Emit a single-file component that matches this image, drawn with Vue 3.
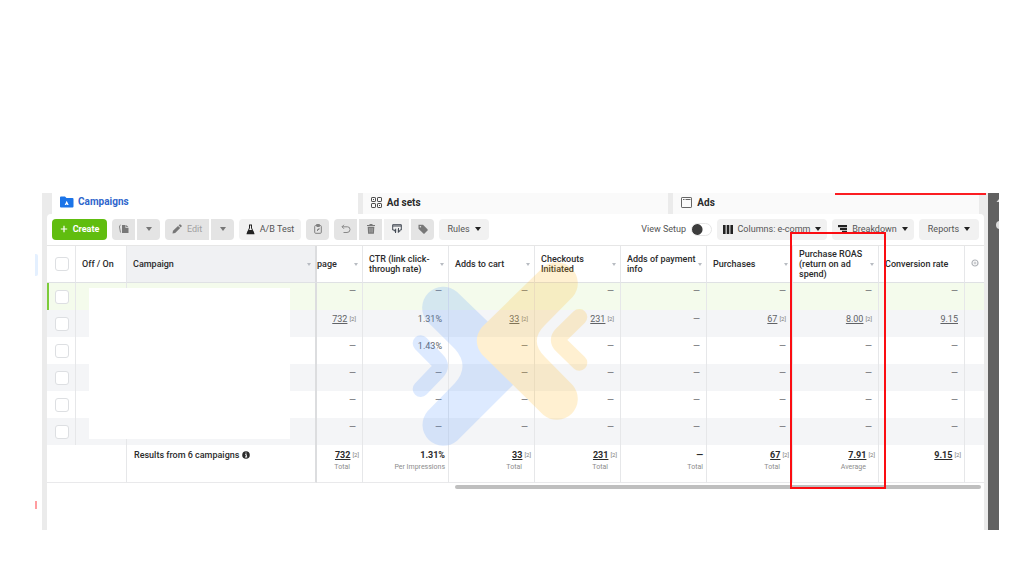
<script setup>
import { ref } from 'vue'

const columns = [
  { key: 'page', label: 'page', cells: ['—', '732', '—', '—', '—', '—'], linked: true, total: '732', note: 'Total' },
  { key: 'ctr', label: 'CTR (link click-through rate)', cells: ['—', '1.31%', '1.43%', '—', '—', '—'], total: '1.31%', note: 'Per Impressions' },
  { key: 'cart', label: 'Adds to cart', cells: ['—', '33', '—', '—', '—', '—'], linked: true, total: '33', note: 'Total' },
  { key: 'checkout', label: 'Checkouts Initiated', cells: ['—', '231', '—', '—', '—', '—'], linked: true, total: '231', note: 'Total' },
  { key: 'payment', label: 'Adds of payment info', cells: ['—', '—', '—', '—', '—', '—'], total: '—', note: 'Total' },
  { key: 'purchases', label: 'Purchases', cells: ['—', '67', '—', '—', '—', '—'], linked: true, total: '67', note: 'Total' },
  { key: 'roas', label: 'Purchase ROAS (return on ad spend)', cells: ['—', '8.00', '—', '—', '—', '—'], linked: true, total: '7.91', note: 'Average' },
  { key: 'rate', label: 'Conversion rate', cells: ['—', '9.15', '—', '—', '—', '—'], linked: true, bare: true, total: '9.15', note: '' },
]
const selected = ref([false, false, false, false, false, false])
const all = ref(false)
const setup = ref(false)
</script>

<template>
  <main class="page">
    <span class="edge-blue"></span>
    <span class="edge-red"></span>
    <div class="frame">
      <div class="manager">
        <nav class="tabs">
          <a href="#" class="tab active">
            <svg width="14" height="12" viewBox="0 0 14 12"><path d="M0 1.5Q0 .5 1 .5H5L6.5 2H12.5Q13.500 2 13.500 3V10.500Q13.500 11.500 12.500 11.500H1Q0 11.500 0 10.500Z" fill="#1b74e8" /><path d="M6.700 4.800L8.700 9H7.500L6.700 8.300L5.900 9H4.700Z" fill="#fff" /></svg>
            <span>Campaigns</span>
          </a>
          <a href="#" class="tab">
            <svg width="12" height="12" viewBox="0 0 12 12" fill="none" stroke="#4a4a4a"><rect x=".5" y=".5" width="4" height="4" rx=".6" /><rect x="6.500" y=".5" width="4" height="4" rx=".6" /><rect x=".5" y="6.500" width="4" height="4" rx=".6" /><rect x="6.500" y="6.500" width="4" height="4" rx=".6" /><path d="M2 2.500H3M8 8.500H9" /></svg>
            <span>Ad sets</span>
          </a>
          <a href="#" class="tab">
            <svg width="12" height="12" viewBox="0 0 12 12" fill="none" stroke="#666"><rect x=".5" y=".5" width="10" height="10" rx=".6" /><path d="M2 2.500H3.500M4.500 2.500H9.500" /></svg>
            <span>Ads</span>
          </a>
        </nav>

        <section class="panel">
          <div class="toolbar">
            <button class="btn create">
              <svg width="8" height="8" viewBox="0 0 8 8" stroke="#fff" stroke-width="1.200"><path d="M4 .8V7.200M.8 4H7.200" /></svg>
              Create
            </button>
            <div class="group">
              <button class="btn muted icon" aria-label="Duplicate">
                <svg width="12" height="12" viewBox="0 0 12 12"><path d="M4 2H7.500V5H10.500V10H4Z" fill="#777" /><path d="M8.200 2L10.500 4.300H8.200Z" fill="#777" /><path d="M2.700 2Q1.200 2.500 1.500 4L2.500 9.500" fill="none" stroke="#888" /></svg>
              </button>
              <button class="btn muted icon" aria-label="Duplicate options"><i class="caret soft"></i></button>
            </div>
            <div class="group">
              <button class="btn muted edit">
                <svg width="10" height="10" viewBox="0 0 10 10" fill="#777"><path d="M.5 9.500L1 6.800L6 1.900L8.200 4.100L3.200 9Z" /><path d="M6.600 1.300L7.600.4Q8 .1 8.400.4L9.600 1.600Q9.900 2 9.600 2.400L8.700 3.400Z" /></svg>
                Edit
              </button>
              <button class="btn muted icon" aria-label="Edit options"><i class="caret soft"></i></button>
            </div>
            <button class="btn test">
              <svg width="9" height="11" viewBox="0 0 9 11"><path d="M3 1H6M3.500 1V4L1 9.500H8L5.500 4V1" fill="none" stroke="#222" /><path d="M2.500 6H6.500L8.500 10.200H.5Z" fill="#222" /></svg>
              A/B Test
            </button>
            <button class="btn muted icon" aria-label="Clipboard">
              <svg width="8" height="10" viewBox="0 0 8 10" fill="none" stroke="#808080"><rect x=".7" y="1.500" width="6.600" height="7.800" rx="1" /><path d="M2.500 1.500V.5H5.500V2.500H2.500M3.500 7V5.500H5V4" /></svg>
            </button>
            <div class="group">
              <button class="btn muted icon" aria-label="Undo">
                <svg width="10" height="10" viewBox="0 0 10 10" fill="none" stroke="#888"><path d="M3 .8L1 2.800L3 4.800M1 2.800H6.500Q9 2.800 9 5.500Q9 8.500 6 8.500H2.500" /></svg>
              </button>
              <button class="btn muted icon" aria-label="Delete">
                <svg width="8" height="10" viewBox="0 0 8 10"><path d="M0 1H2.500V0H5.500V1H8V2H0Z" fill="#777" /><path d="M.7 2.700H7.300L6.900 9.800H1.100Z" fill="#777" /><path d="M2.700 4V8.500M4 4V8.500M5.300 4V8.500" stroke="#bbb" stroke-width=".6" /></svg>
              </button>
              <button class="btn icon wide" aria-label="Import and export">
                <svg width="10" height="10" viewBox="0 0 10 10" fill="none" stroke="#444b55"><path d="M2 6H.7V.7H9.300V6H8M.7 2H9.300" /><path d="M1.800 6.500L4 4.700V8.300ZM8.300 7L6 5.200V8.800Z" fill="#444b55" stroke-width=".4" /><path d="M3.500 9V6.500M6.500 4V7" /></svg>
              </button>
              <button class="btn muted icon" aria-label="Tag">
                <svg width="10" height="10" viewBox="0 0 10 10"><path d="M.5.8H5L9.500 5.300Q10 6 9.500 6.600L6.600 9.500Q6 10 5.300 9.500L.5 4.800Z" fill="#777" /><circle cx="2.400" cy="2.700" r=".8" fill="#e4e4e4" /></svg>
              </button>
            </div>
            <button class="btn rules">Rules <i class="caret"></i></button>

            <label class="setup">View Setup <input v-model="setup" type="checkbox" role="switch" /></label>
            <button class="btn columns">
              <svg width="10" height="9" viewBox="0 0 10 9" fill="#222"><rect width="2.600" height="9" /><rect x="3.700" width="2.600" height="9" /><rect x="7.400" width="2.600" height="9" /></svg>
              Columns: e-comm <i class="caret"></i>
            </button>
            <button class="btn breakdown">
              <svg width="9" height="8" viewBox="0 0 9 8" fill="#222"><rect width="9" height="2.200" /><rect x="2" y="2.900" width="7" height="2.200" /><rect x="4" y="5.800" width="5" height="2.200" /></svg>
              Breakdown <i class="caret"></i>
            </button>
            <button class="btn reports">Reports <i class="caret"></i></button>
          </div>

          <table>
            <colgroup>
              <col class="w-check" /><col class="w-switch" /><col /><col class="w-page" />
              <col v-for="c in columns.slice(1)" :key="c.key" class="w-metric" />
              <col class="w-end" />
            </colgroup>
            <thead>
              <tr>
                <th><input v-model="all" type="checkbox" class="tick" aria-label="Select all campaigns" /></th>
                <th>Off / On</th>
                <th class="name"><div class="head">Campaign<i class="caret sort"></i></div></th>
                <th v-for="c in columns" :key="c.key" :class="'col-' + c.key">
                  <div class="head"><span>{{ c.label }}</span><i v-if="c.key !== 'rate'" class="caret sort"></i></div>
                </th>
                <th class="end">
                  <svg width="8" height="8" viewBox="0 0 8 8" fill="none" stroke="#b0b3b8"><circle cx="4" cy="4" r="3" stroke-width="1.200" /><path d="M4 2.500V5.500M2.500 4H5.500" stroke-width=".8" /></svg>
                </th>
              </tr>
            </thead>
            <tbody>
              <tr v-for="(s, i) in selected" :key="i">
                <td><input v-model="selected[i]" type="checkbox" class="tick" :aria-label="'Select campaign ' + (i + 1)" /></td>
                <td></td>
                <td class="name"></td>
                <td v-for="c in columns" :key="c.key" class="num">
                  <template v-if="c.linked && c.cells[i] !== '—'"><span class="dotted">{{ c.cells[i] }}</span><small v-if="!c.bare">[2]</small></template>
                  <template v-else>{{ c.cells[i] }}</template>
                </td>
                <td></td>
              </tr>
            </tbody>
            <tfoot>
              <tr>
                <td colspan="2"></td>
                <td class="name results">
                  Results from 6 campaigns
                  <svg width="8" height="8" viewBox="0 0 8 8"><circle cx="4" cy="4" r="3.800" fill="#2b2b2b" /><path d="M4 1.500V2.600M3.200 3.600H4.300V6M3 6H5.200" stroke="#fff" fill="none" /></svg>
                </td>
                <td v-for="c in columns" :key="c.key" class="num">
                  <template v-if="c.linked"><b class="dotted">{{ c.total }}</b><small>[2]</small></template>
                  <b v-else>{{ c.total }}</b>
                  <p :class="{ inset: c.linked }">{{ c.note }}</p>
                </td>
                <td></td>
              </tr>
            </tfoot>
          </table>
          <div class="scroll"></div>
          <div class="cover"></div>
        </section>
      </div>
      <aside class="rail">
        <svg width="11" height="50" viewBox="0 0 11 50" fill="#ddd"><path d="M11 6L8.500 9H11Z" /><circle cx="12" cy="32" r="4" /></svg>
      </aside>

      <svg class="mark" width="180" height="190" viewBox="410 259 180 190">
        <g opacity=".2">
          <path fill="#5a9bff" d="M457.100 291.100L533 364L457.100 439.800A21 21 0 0 1 427.500 410.200L455 382Q470 365 455 348L427.500 320.800A21 21 0 0 1 457.100 291.100Z" />
          <path fill="none" stroke="#5a9bff" stroke-width="16" stroke-linecap="round" d="M420.700 342.300L437 359Q443 365 437 371L420.700 388" />
          <path fill="#ffb91e" d="M543.200 266.200L482 326Q471.500 339.500 482 353.500L543.200 413.800A21 21 0 0 0 572.800 384.200L545 356Q528.500 340 545 324L572.800 295.800A21 21 0 0 0 543.200 266.200Z" />
          <path fill="none" stroke="#ffb91e" stroke-width="16" stroke-linecap="round" d="M579.300 316L561.700 333.300Q556 339 561.700 344.700L579.300 361.700" />
        </g>
      </svg>
      <span class="red-line"></span>
      <span class="red-box"></span>
    </div>
  </main>
</template>

<style>
body {
  background: #fff;
}
</style>

<style scoped>
* {
  box-sizing: border-box;
}
.page {
  position: relative;
  padding: 193px 25px 46px 42px;
  font-family: Roboto, "Liberation Sans", sans-serif;
  font-size: 9px;
  line-height: 10px;
  color: #2b2b2b;
}
.edge-blue,
.edge-red {
  position: absolute;
  left: 35px;
  width: 2px;
}
.edge-blue {
  top: 254px;
  width: 3px;
  height: 22px;
  border-radius: 0 2px 2px 0;
  background: #e4f0ff;
}
.edge-red {
  top: 501px;
  height: 8px;
  background: #ff9da0;
}
.frame {
  position: relative;
  display: flex;
  min-height: 337px;
}
.manager {
  flex: 1;
  min-width: 0;
  display: flex;
  flex-direction: column;
  padding: 0 4px 0 5px;
  background: #ebebeb;
}
.rail {
  width: 11px;
  background: #616161;
}
.tabs {
  display: grid;
  grid-template-columns: repeat(3, 1fr);
  gap: 5px;
  height: 21px;
  padding: 0 5px;
}
.tab {
  display: flex;
  align-items: center;
  gap: 4px;
  padding: 0 8px 2px;
  background: #fafafa;
  color: #2b2b2b;
  font-size: 10px;
  font-weight: 700;
  line-height: 12px;
  text-decoration: none;
}
.tab.active {
  background: #fff;
  color: #2f66cc;
  padding-bottom: 4px;
}
.panel {
  position: relative;
  flex: 1;
  border-radius: 4px 4px 0 0;
  background: #fff;
}
.toolbar {
  display: flex;
  align-items: center;
  gap: 5px;
  height: 32px;
  padding: 0 5px 1px;
  border-bottom: 1px solid #e6e6e6;
}
.group {
  display: flex;
  gap: 2px;
}
.btn {
  display: flex;
  align-items: center;
  justify-content: center;
  gap: 5px;
  height: 21px;
  padding: 0;
  border: 0;
  border-radius: 4px;
  background: #f1f1f1;
  color: #555;
  font: inherit;
  white-space: nowrap;
}
.muted {
  background: #e4e4e4;
  color: #a0a0a0;
}
.icon {
  width: 23px;
}
.icon.wide {
  width: 25px;
}
.group .btn:not(:last-child) {
  border-top-right-radius: 0;
  border-bottom-right-radius: 0;
}
.group .btn:not(:first-child) {
  border-top-left-radius: 0;
  border-bottom-left-radius: 0;
}
.create {
  width: 55px;
  background: #60bd0f;
  color: #fff;
  font-weight: 700;
}
.edit {
  width: 44px;
}
.test {
  width: 62px;
}
.rules {
  width: 50px;
}
.columns {
  width: 110px;
}
.breakdown {
  width: 82px;
}
.reports {
  width: 60px;
}
.caret {
  flex: none;
  border: 3px solid transparent;
  border-top: 4px solid #222;
  border-bottom: 0;
}
.caret.soft {
  border-top-color: #777;
}
.caret.sort {
  border-width: 3px 2px 0;
  border-top-color: #b8bcc2;
}
.setup {
  display: flex;
  align-items: center;
  gap: 5px;
  margin-left: auto;
  color: #555;
}
.setup input {
  appearance: none;
  width: 21px;
  height: 13px;
  margin: 0;
  border: 1px solid #e6e6e6;
  border-radius: 7px;
  background: radial-gradient(circle at 5px 50%, #3d3d3d 5px, #fff 6px);
}
table {
  width: 100%;
  table-layout: fixed;
  border-collapse: separate;
  border-spacing: 0;
}
.w-check { width: 29px; }
.w-switch { width: 51px; }
.w-page { width: 46px; }
.w-metric { width: 86px; }
.w-end { width: 19px; }
th,
td {
  padding: 0 6px;
  border-right: 1px solid #e6e7e9;
  text-align: left;
}
th:last-child,
td:last-child {
  border-right: 0;
}
th {
  height: 37px;
  border-bottom: 1px solid #dfe1e4;
  font-weight: 500;
}
th.name {
  background: #f0f1f3;
}
.name {
  border-right: 2px solid #dcdddf;
}
.head {
  display: flex;
  align-items: center;
  justify-content: space-between;
}
th.name .head,
.name ~ th .head {
  margin-right: -2px;
}
th.col-page {
  padding-left: 0;
}
th.end {
  padding: 0 0 0 6px;
}
.tick {
  display: block;
  appearance: none;
  width: 14px;
  height: 14px;
  margin: 0 0 0 2px;
  border: 1px solid #dddfe2;
  border-radius: 3px;
  background: #fff;
}
.tick:checked,
.setup input:checked {
  background-color: #1b74e8;
}
tbody td {
  height: 27px;
}
tbody tr:nth-child(even) td {
  background: #f4f5f7;
}
tbody tr:first-child td {
  background: #f4fbec;
}
tbody tr:first-child td:first-child {
  box-shadow: inset 2px 0 #7ccb3a;
}
td.num {
  padding: 4px 6px 0 0;
  vertical-align: top;
  text-align: right;
  color: #606266;
  white-space: nowrap;
}
tbody tr:first-child td.num {
  padding-top: 3px;
}
.dotted {
  text-decoration: underline;
  text-underline-offset: 1px;
}
small {
  margin-left: 2px;
  font-size: 6px;
  line-height: 0;
  vertical-align: 1px;
  color: #777;
}
tfoot td,
tfoot td.num {
  height: 38px;
  padding: 5px 3px 0 7px;
  border-bottom: 1px solid #e9e9eb;
  vertical-align: top;
}
tfoot td.num {
  padding-left: 0;
}
tfoot b {
  color: #2b2b2b;
  font-weight: 700;
}
tfoot p {
  margin: 2px 0 0;
  font-size: 7px;
  color: #8c8c8c;
}
tfoot p.inset {
  margin-right: 9px;
}
.results {
  font-weight: 500;
}
.results svg {
  vertical-align: -1px;
}
.scroll {
  height: 4px;
  margin: 2px 3px 0 408px;
  border-radius: 2px;
  background: #bfbfbf;
}
.cover {
  position: absolute;
  top: 74px;
  left: 42px;
  width: 201px;
  height: 151px;
  background: #fff;
}
.mark,
.red-line,
.red-box {
  position: absolute;
  pointer-events: none;
}
.mark {
  top: 67px;
  right: 409px;
}
.red-line {
  top: 0;
  right: 13px;
  width: 151px;
  height: 2px;
  background: #fb1d22;
}
.red-box {
  top: 39px;
  right: 113px;
  width: 96px;
  height: 257px;
  border: 2px solid #fb0d12;
}
</style>
